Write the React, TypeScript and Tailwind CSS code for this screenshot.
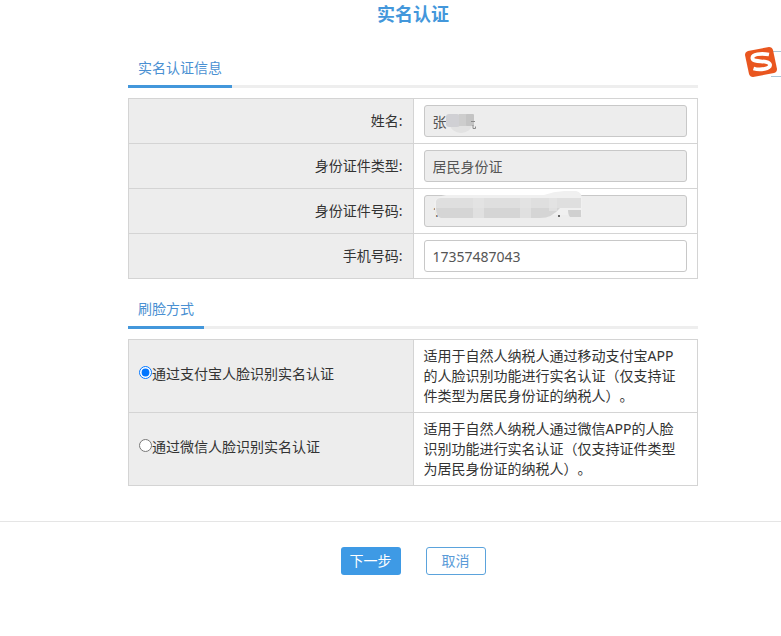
import { useState } from "react";
import type { ReactNode } from "react";

interface ISectionProps {
  title: string
  children: ReactNode
}

const Section = (props: ISectionProps) => {
  return (
    <section className="mb-5">
      <div className="mb-[10px] flex shadow-[inset_0_-3px_0_#eeeeee]">
        <h2 className="border-b-3 border-[#4397db] px-[10px] pb-[7px] leading-5 text-[#4a90d2]">{props.title}</h2>
      </div>
      {props.children}
    </section>
  )
}

const NameMask = () => (
  <svg className="pointer-events-none absolute top-1 left-5" width="34" height="28" viewBox="0 0 34 28">
    <ellipse cx="17" cy="15" rx="11" ry="9" fill="#e2e2e2" />
    <rect x="2" y="5" width="14" height="13" rx="3" fill="#d0d0d4" />
    <rect x="15" y="5" width="8" height="12" fill="#cdcdcd" />
    <rect x="22" y="5" width="8" height="12" rx="1" fill="#c4c4c4" />
    <path d="M27 12.5H31M29 16V19.5H31.5V17.5" fill="none" stroke="#8a8a8a" />
  </svg>
)

const NumberMask = () => (
  <svg className="pointer-events-none absolute -top-1 left-0" width="170" height="34" viewBox="0 0 170 34">
    <path d="M10 12Q12 5 22 4H120Q134 -1 152 0Q159 1 158 12V24H12Z" fill="#f0f0f0" />
    <path d="M12 10Q13 7 17 7H157V17H12Z" fill="#dfdfdf" />
    <path d="M12 17H136Q128 27 116 27H17Q12 26 12 17Z" fill="#d5d5d5" />
    <path d="M144 19H157V26H146Q144 24 144 19Z" fill="#d0d0d0" />
    <path d="M49 7H60V27H49ZM96 7H107V27H96ZM125 7H133V20H125Z" fill="#e4e4e4" opacity="0.7" />
    <rect x="134" y="24" width="2" height="2" fill="#666" />
  </svg>
)

const fields = [
  { id: "name", label: "姓名:", value: "张", disabled: true, mask: <NameMask /> },
  { id: "cardType", label: "身份证件类型:", value: "居民身份证", disabled: true, mask: null },
  { id: "cardNumber", label: "身份证件号码:", value: "1", disabled: true, mask: <NumberMask /> },
  { id: "phone", label: "手机号码:", value: "17357487043", disabled: false, mask: null },
]

const methods = [
  {
    id: "alipay",
    label: "通过支付宝人脸识别实名认证",
    text: "适用于自然人纳税人通过移动支付宝APP的人脸识别功能进行实名认证（仅支持证件类型为居民身份证的纳税人）。",
  },
  {
    id: "wechat",
    label: "通过微信人脸识别实名认证",
    text: "适用于自然人纳税人通过微信APP的人脸识别功能进行实名认证（仅支持证件类型为居民身份证的纳税人）。",
  },
]

const InputMethodBadge = () => (
  <svg className="absolute top-11 right-0" width="40" height="36" viewBox="0 0 40 36" aria-label="S">
    <path d="M30 7.5H40M30 32.5H40" stroke="#a9c6d8" />
    <path d="M7 7L28 3Q31 3 32 6L36 25Q36 28 33 29L12 33Q9 33 8 30L4 11Q4 8 7 7Z" fill="#e9561f" />
    <path d="M28 10.5C20 9 10.500 10 11.500 14.500C12.500 19 27.500 15.500 29 20.500C30 25 19 26.500 12.500 24.500" fill="none" stroke="#fff" strokeWidth="3.800" />
  </svg>
)

const App = () => {

  const [ method, setMethod ] = useState("alipay");
  const [ phone, setPhone ] = useState("17357487043");

  return (
    <div className="relative bg-white font-['Noto_Sans','Noto_Sans_CJK_SC',sans-serif] text-sm text-[#333] [text-spacing-trim:space-all]">
      <main className="flex flex-col items-center pl-[45px]">
        <h1 className="mb-[30px] text-lg leading-7 font-bold text-[#4397db]">实名认证</h1>
        <div className="w-full max-w-[570px]">
          <Section title="实名认证信息">
            <table className="w-full table-fixed border-collapse">
              <tbody>
                {fields.map((field) =>
                  <tr key={field.id}>
                    <th className="border border-[#d4d4d4] bg-[#ededed] px-[10px] text-right font-normal">
                      <label htmlFor={field.id}>{field.label}</label>
                    </th>
                    <td className="border border-[#d4d4d4] px-[10px] py-[6px]">
                      <div className="relative flex">
                        <input
                          id={field.id}
                          className="h-8 w-full rounded-[3px] border border-[#c8c8c8] bg-white px-2 text-[#555] disabled:bg-[#ededed]"
                          value={field.disabled ? field.value : phone}
                          disabled={field.disabled}
                          onChange={(e) => setPhone(e.target.value)}
                        />
                        {field.mask}
                      </div>
                    </td>
                  </tr>
                )}
              </tbody>
            </table>
          </Section>
          <Section title="刷脸方式">
            <table className="w-full table-fixed border-collapse">
              <tbody>
                {methods.map((item) =>
                  <tr key={item.id}>
                    <td className="border border-[#d4d4d4] bg-[#ededed] px-[10px] pb-1">
                      <label className="flex items-center">
                        <input
                          type="radio"
                          name="method"
                          className="mb-[3px] size-[13px]"
                          checked={method == item.id}
                          onChange={() => setMethod(item.id)}
                        />
                        {item.label}
                      </label>
                    </td>
                    <td className="border border-[#d4d4d4] px-[10px] py-[6px] leading-5">{item.text}</td>
                  </tr>
                )}
              </tbody>
            </table>
          </Section>
        </div>
      </main>
      <footer className="mt-[15px] flex justify-center gap-[25px] border-t border-[#e5e5e5] pt-[25px] pl-[45px]">
        <button className="h-7 w-[60px] rounded-[3px] bg-[#3e9ae5] text-white">下一步</button>
        <button className="h-7 w-[60px] rounded-[3px] border border-[#5ba3dc] bg-white text-[#5a9bd8]">取消</button>
      </footer>
      <InputMethodBadge />
    </div>
  )
}

export default App;
